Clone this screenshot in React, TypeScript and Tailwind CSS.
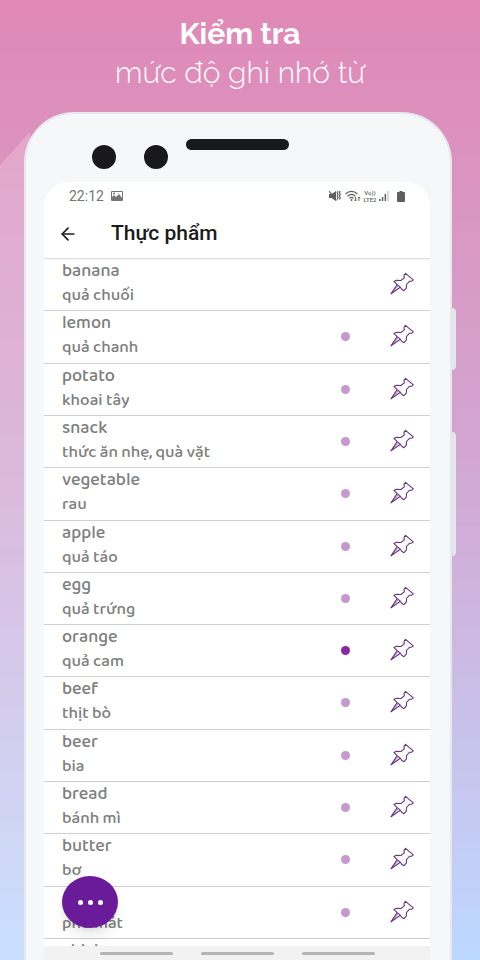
import { ArrowLeft } from 'lucide-react';

const words = [
  { term: 'banana', meaning: 'quả chuối', level: 0 },
  { term: 'lemon', meaning: 'quả chanh', level: 1 },
  { term: 'potato', meaning: 'khoai tây', level: 1 },
  { term: 'snack', meaning: 'thức ăn nhẹ, quà vặt', level: 1 },
  { term: 'vegetable', meaning: 'rau', level: 1 },
  { term: 'apple', meaning: 'quả táo', level: 1 },
  { term: 'egg', meaning: 'quả trứng', level: 1 },
  { term: 'orange', meaning: 'quả cam', level: 2 },
  { term: 'beef', meaning: 'thịt bò', level: 1 },
  { term: 'beer', meaning: 'bia', level: 1 },
  { term: 'bread', meaning: 'bánh mì', level: 1 },
  { term: 'butter', meaning: 'bơ', level: 1 },
  { term: 'cheese', meaning: 'phô mát', level: 1 },
];

const levelColors = ['bg-transparent', 'bg-[#c797cf]', 'bg-[#8a27a3]'];

function PinIcon() {
  return (
    <svg viewBox="0 0 24 24" className="h-6 w-6" fill="none" stroke="#65357f" strokeWidth="1.1" strokeLinejoin="round">
      <path d="M15.5 1.3 23.3 7.8 21.800 9.200 19.400 9.300 16.500 12.500 16.300 16.200 14 18.700 12 17.600 10.300 15.200 7.200 12.600 3.900 9.400 6.400 8.200 10.900 8.500 14.300 5.900 14 3.400z" />
      <path d="M7.200 12.600 1 21.900l9.300-6.700" />
      <path d="M1 21.900l7.500-8.200" strokeWidth="0.600" />
    </svg>
  );
}

function StatusBar() {
  return (
    <div className="flex h-7 shrink-0 items-center justify-between px-[25px] text-[#757575]">
      <div className="flex items-center gap-[7px]">
        <span className="font-[Roboto,sans-serif] text-sm">22:12</span>
        <svg viewBox="0 0 12 10" className="h-[10px] w-3">
          <path fill="currentColor" fillRule="evenodd" d="M1 0h10a1 1 0 0 1 1 1v8a1 1 0 0 1-1 1H1a1 1 0 0 1-1-1V1a1 1 0 0 1 1-1zm0 1v5l2-2 2 2 3-3 3 4V1zM3 1.5a1 1 0 1 1 0 2 1 1 0 0 1 0-2z" />
        </svg>
      </div>
      <div className="flex items-center text-[#5f5f5f]">
        <svg viewBox="0 0 12 12" className="h-3 w-3">
          <path fill="currentColor" d="M0 4h2.500L7 1v10L2.500 8H0z" />
          <path fill="none" stroke="currentColor" strokeWidth="1.200" d="M0 1l7.500 9.500M9 1l-.8 1.700.8 1.700-.8 1.700.8 1.700-.8 1.700M11.200 1l-.8 1.700.8 1.700-.8 1.700.8 1.700-.8 1.700" />
        </svg>
        <svg viewBox="0 0 16 12" className="ml-1 h-3 w-4" fill="none" stroke="currentColor" strokeWidth="1.200">
          <path d="M0.500 4c3.500-3.500 8.500-3.500 12 0M2.500 6.200c2.500-2.200 5.500-2.200 8 0M4.500 8.300c1.300-1.200 2.700-1.200 4 0" />
          <circle cx="6.500" cy="10" r="0.900" fill="currentColor" stroke="none" />
          <path d="M10.500 7v4M9.200 9.700l1.300 1.300 1.300-1.300M14 11V7M12.700 8.300 14 7l1.300 1.300" strokeWidth="0.900" />
        </svg>
        <div className="ml-px flex w-4 flex-col items-center font-[Roboto,sans-serif] text-[6px] leading-[7px] font-medium">
          <span>Vo))</span>
          <span>LTE2</span>
        </div>
        <svg viewBox="0 0 10 10" className="ml-px h-[10px] w-[10px]" fill="currentColor">
          <path d="M0 8h1.500v2H0zM2.800 6h1.500v4H2.800zM5.600 3h1.500v7H5.600z" />
          <path d="M8.400 0h1.200v10H8.400z" opacity="0.400" />
        </svg>
        <svg viewBox="0 0 8 11" className="ml-2 h-[11px] w-2" fill="currentColor">
          <path d="M2.500 0h3v1H7a1 1 0 0 1 1 1v8a1 1 0 0 1-1 1H1a1 1 0 0 1-1-1V2a1 1 0 0 1 1-1h1.500z" />
        </svg>
      </div>
    </div>
  );
}

function WordRow({ term, meaning, level }: { term: string; meaning: string; level: number }) {
  return (
    <li className="flex items-start border-b border-[#cfcfcf] pr-4 pl-[18px]">
      <div className="min-w-0 flex-1 font-['Baloo_2','Noto_Sans',sans-serif] font-medium text-[#7f7f7f]">
        <p className="text-lg leading-6">{term}</p>
        <p className="text-[17px] leading-[26px]">{meaning}</p>
      </div>
      <span className={`mt-[21px] h-[9px] w-[9px] rounded-full ${levelColors[level]}`} />
      <button aria-label="Ghim" className="mt-[13px] ml-10">
        <PinIcon />
      </button>
    </li>
  );
}

export default function App() {
  return (
    <main className="relative flex h-screen flex-col overflow-hidden bg-linear-to-b from-[#e088b6] via-[#d3a4d0] via-45% to-[#bcd8ff]">
      <svg viewBox="0 0 30 840" className="absolute top-[120px] left-0 h-[840px] w-[30px]">
        <path d="M0 45 30 12v828H0z" fill="#fff" opacity="0.200" />
      </svg>

      <header className="relative pt-[13px] text-center font-[Raleway,'Open_Sans',sans-serif] text-[30px] text-white">
        <h1 className="leading-[42px] font-bold">Kiểm tra</h1>
        <p className="leading-9 font-light">mức độ ghi nhớ từ</p>
      </header>

      <div className="relative mt-[21px] mr-7 ml-6 flex min-h-0 flex-1 flex-col rounded-t-[50px] border-x-2 border-t-2 border-[#e6e8f0] bg-[#f5f7f9] pr-5 pl-[18px]">
        <div className="absolute top-[194px] -right-[6px] h-[62px] w-[5px] rounded-r-sm bg-[#e4e6ed]" />
        <div className="absolute top-[318px] -right-[6px] h-[124px] w-[5px] rounded-r-sm bg-[#e4e6ed]" />

        <div className="flex h-[68px] shrink-0 pl-12">
          <span className="mt-[31px] h-6 w-6 rounded-full bg-[#19191b]" />
          <span className="mt-[31px] ml-7 h-6 w-6 rounded-full bg-[#19191b]" />
          <span className="mt-[25px] ml-[18px] h-[11px] w-[103px] rounded-full bg-[#19191b]" />
        </div>

        <section className="relative flex min-h-0 flex-1 flex-col overflow-hidden rounded-t-3xl bg-white">
          <StatusBar />
          <div className="flex h-[49px] shrink-0 items-center gap-[33px] border-b border-[#dedede] pl-[14px] shadow-xs">
            <button aria-label="Quay lại" className="text-[#1b1b1b]">
              <ArrowLeft size={20} strokeWidth={2} />
            </button>
            <h2 className="font-[Roboto,sans-serif] text-[21px] font-medium text-[#1b1b1b]">Thực phẩm</h2>
          </div>
          <div className="min-h-0 flex-1 overflow-hidden">
            <ul className="grid h-[680px] auto-rows-fr">
              {words.map((word) => (
                <WordRow key={word.term} {...word} />
              ))}
            </ul>
            <p className="pl-[18px] font-['Baloo_2','Noto_Sans',sans-serif] text-lg leading-6 font-medium text-[#7f7f7f]">chicken</p>
          </div>
          <div className="flex h-[14px] shrink-0 items-center justify-center gap-7 bg-[#f2f2f2]">
            <span className="h-[3px] w-[73px] rounded-full bg-[#b4b4b4]" />
            <span className="h-[3px] w-[73px] rounded-full bg-[#b4b4b4]" />
            <span className="h-[3px] w-[73px] rounded-full bg-[#b4b4b4]" />
          </div>
          <button
            aria-label="Thêm tùy chọn"
            className="absolute bottom-8 left-[18px] flex h-[52px] w-14 items-center justify-center gap-[5px] rounded-[50%] bg-[#6a1b9a] shadow-lg"
          >
            <span className="h-[5px] w-[5px] rounded-full bg-white" />
            <span className="h-[5px] w-[5px] rounded-full bg-white" />
            <span className="h-[5px] w-[5px] rounded-full bg-white" />
          </button>
        </section>
      </div>
    </main>
  );
}
